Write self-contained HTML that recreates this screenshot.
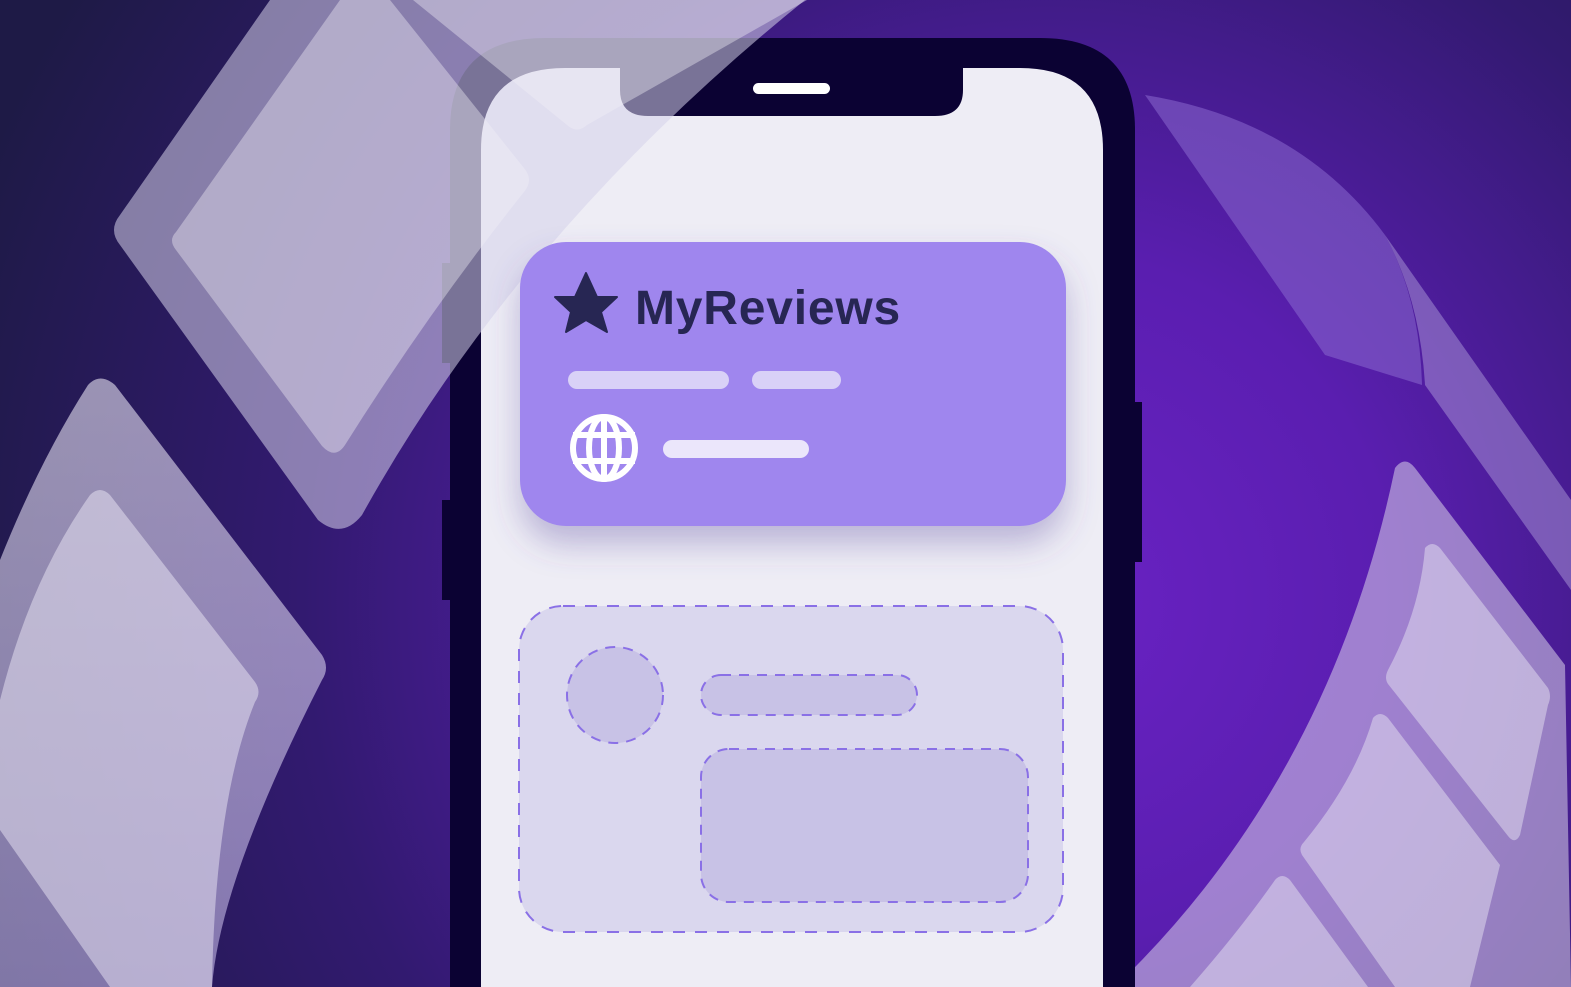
<!DOCTYPE html>
<html><head><style>
html,body{margin:0;padding:0;width:1571px;height:987px;overflow:hidden}
svg{display:block}
</style></head><body>
<svg width="1571" height="987" viewBox="0 0 1571 987" xmlns="http://www.w3.org/2000/svg">
<defs>
<radialGradient id="bg" cx="1050" cy="600" r="1150" gradientUnits="userSpaceOnUse">
<stop offset="0" stop-color="#6a22c4"/>
<stop offset="0.3" stop-color="#5a1eb0"/>
<stop offset="0.65" stop-color="#321a70"/>
<stop offset="1" stop-color="#1e1a46"/>
</radialGradient>
<linearGradient id="bl" x1="0" y1="0" x2="0" y2="1">
<stop offset="0" stop-color="#e8e4f2"/>
<stop offset="1" stop-color="#c0b4e4"/>
</linearGradient>
<filter id="sh" x="-20%" y="-20%" width="140%" height="160%">
<feDropShadow dx="0" dy="18" stdDeviation="16" flood-color="#5a4aa0" flood-opacity="0.35"/>
</filter>
</defs>
<rect width="1571" height="987" fill="url(#bg)"/>

<!-- bottom-left shapes -->
<path d="M88 385 Q100 372 115 385 L322 655 Q330 668 322 680 Q220 880 212 987 L0 987 L0 560 Q40 460 88 385Z" fill="url(#bl)" opacity="0.6"/>
<path d="M90 495 Q100 485 110 495 L255 682 Q262 692 255 702 Q215 800 212 987 L110 987 L0 830 L0 700 Q30 580 90 495Z" fill="#ece8f6" opacity="0.5"/>

<!-- right shapes -->
<path d="M1145 95 Q1300 120 1385 235 Q1420 300 1422 385 L1325 355 Z" fill="#8a6ad0" opacity="0.55"/>
<path d="M1385 235 L1571 500 L1571 590 L1425 385 Q1420 300 1385 235Z" fill="#b9a8e0" opacity="0.45"/>
<path d="M1395 468 Q1405 455 1415 468 L1565 665 L1571 987 L1115 987 Q1330 780 1395 468Z" fill="#d8d2ea" opacity="0.55"/>
<path d="M1425 548 Q1432 540 1440 548 L1548 688 Q1552 696 1548 705 L1520 835 Q1515 845 1508 836 L1388 684 Q1384 678 1388 670 Q1420 610 1425 548Z" fill="#e6e2f2" opacity="0.5"/>
<path d="M1373 718 Q1380 710 1388 718 L1500 865 L1470 987 L1395 987 L1302 855 Q1298 848 1304 842 Q1355 780 1373 718Z" fill="#e6e2f2" opacity="0.5"/>
<path d="M1275 880 Q1282 872 1290 880 L1368 987 L1190 987 Q1240 930 1275 880Z" fill="#e6e2f2" opacity="0.5"/>

<!-- phone -->
<rect x="442" y="263" width="12" height="100" fill="#0b0233"/>
<rect x="442" y="500" width="12" height="100" fill="#0b0233"/>
<rect x="1130" y="402" width="12" height="160" fill="#0b0233"/>
<path d="M450 1000 L450 130 Q450 38 545 38 L1040 38 Q1135 38 1135 130 L1135 1000Z" fill="#0b0233"/>
<path d="M481 1000 L481 150 Q481 68 565 68 L620 68 L620 90 Q620 116 648 116 L935 116 Q963 116 963 90 L963 68 L1020 68 Q1103 68 1103 150 L1103 1000Z" fill="#eeedf5"/>
<rect x="753" y="83" width="77" height="11" rx="5.5" fill="#fff"/>

<!-- translucent diamond shapes over phone -->
<path d="M120 215 L270 0 L805 0 Q520 230 362 515 Q342 540 318 520 L120 245 Q108 230 120 215Z" fill="#d6d2ea" opacity="0.55"/>
<path d="M176 232 L340 0 L390 0 L524 168 Q534 180 524 192 Q430 310 345 445 Q335 460 322 446 L176 250 Q168 240 176 232Z" fill="#f2eff8" opacity="0.4"/>
<path d="M413 0 L807 0 L587 125 Q577 134 567 125 Z" fill="#f2eff8" opacity="0.4"/>

<!-- card -->
<rect x="520" y="242" width="546" height="284" rx="46" fill="#9f86ee" filter="url(#sh)"/>
<path d="M586 273 L597 297 L617 297 L601 312 L607 332 L586 320 L566 332 L571 312 L555 297 L575 297Z" fill="#272653" stroke="#272653" stroke-width="2" stroke-linejoin="round"/>
<text x="635" y="324" font-family="Liberation Sans, sans-serif" font-weight="bold" font-size="48" fill="#272653" letter-spacing="0.8">MyReviews</text>
<rect x="568" y="371" width="161" height="18" rx="9" fill="#d9d1f7"/>
<rect x="752" y="371" width="89" height="18" rx="9" fill="#d9d1f7"/>
<rect x="663" y="440" width="146" height="18" rx="9" fill="#ebe6fb"/>
<g fill="none" stroke="#fff" stroke-width="6">
<circle cx="604" cy="448" r="31"/>
<ellipse cx="604" cy="448" rx="15" ry="31"/>
<line x1="604" y1="417" x2="604" y2="479"/>
<line x1="573" y1="435" x2="635" y2="435"/>
<line x1="573" y1="461" x2="635" y2="461"/>
</g>

<!-- dashed card -->
<rect x="519" y="606" width="544" height="326" rx="44" fill="#dad7ee" stroke="#8a70e6" stroke-width="2" stroke-dasharray="12 10"/>
<circle cx="615" cy="695" r="48" fill="#c8c2e6" stroke="#8a70e6" stroke-width="2" stroke-dasharray="10 8"/>
<rect x="701" y="675" width="216" height="40" rx="20" fill="#c8c2e6" stroke="#8a70e6" stroke-width="2" stroke-dasharray="10 8"/>
<rect x="701" y="749" width="327" height="153" rx="28" fill="#c8c2e6" stroke="#8a70e6" stroke-width="2" stroke-dasharray="10 8"/>
</svg>
</body></html>
